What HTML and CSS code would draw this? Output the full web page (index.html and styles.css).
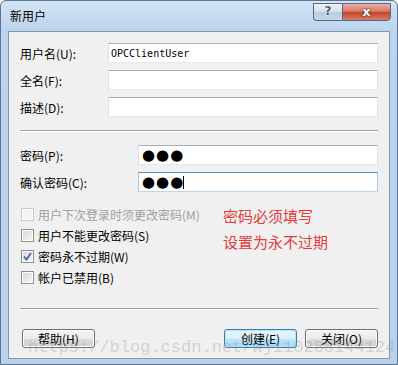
FILE: index.html
```html
<!DOCTYPE html>
<html lang="zh-CN">
<head>
    <meta charset="UTF-8">
    <meta name="viewport" content="width=device-width, initial-scale=1.0">
    <title>新用户</title>
    <link rel="stylesheet" href="styles.css">
</head>
<body>
<div class="window">
    <div class="titlebar">
        <span class="title">新用户</span>
        <div class="caption-btns">
            <span class="cap-help">?</span>
            <span class="cap-close">x</span>
        </div>
    </div>
    <div class="client">
        <div class="fields">
            <div class="row"><span class="label">用户名(U):</span><div class="input name-input">OPCClientUser</div></div>
            <div class="row"><span class="label">全名(F):</span><div class="input name-input"></div></div>
            <div class="row"><span class="label">描述(D):</span><div class="input name-input"></div></div>
        </div>
        <div class="sep"></div>
        <div class="fields">
            <div class="row"><span class="label pw-label">密码(P):</span><div class="input pw-input">●●●</div></div>
            <div class="row"><span class="label pw-label">确认密码(C):</span><div class="input pw-input focused">●●●<span class="caret"></span></div></div>
        </div>
        <div class="options">
            <div class="checks">
                <div class="check disabled"><span class="box"></span>用户下次登录时须更改密码(M)</div>
                <div class="check"><span class="box"></span>用户不能更改密码(S)</div>
                <div class="check"><span class="box"><svg width="11" height="11" viewBox="0 0 11 11"><path d="M2 5.5 L4.5 8.5 L9 2" fill="none" stroke="#4a64a8" stroke-width="1.8"/></svg></span>密码永不过期(W)</div>
                <div class="check"><span class="box"></span>帐户已禁用(B)</div>
            </div>
            <div class="notes">
                <div>密码必须填写</div>
                <div>设置为永不过期</div>
            </div>
        </div>
        <div class="sep sep-bottom"></div>
        <div class="buttons">
            <button class="btn help-btn">帮助(H)</button>
            <div class="btn-group">
                <button class="btn default">创建(E)</button>
                <button class="btn">关闭(O)</button>
            </div>
        </div>
    </div>
    <div class="watermark">https://blog.csdn.net/wj110288144124</div>
</div>
</body>
</html>
```

FILE: styles.css
```css
body {
    margin: 0;
    font-family: "Noto Sans CJK SC", sans-serif;
    font-size: 12px;
    color: #000;
}
.window {
    position: relative;
    width: 398px;
    height: 365px;
    box-sizing: border-box;
    border: 1px solid #5c7391;
    border-radius: 6px 6px 0 0;
    background: linear-gradient(to bottom, #d3e4f6, #bcd4ee 30px, #b9d1ec);
    display: flex;
    flex-direction: column;
    overflow: hidden;
}
.titlebar {
    height: 30px;
    display: flex;
    justify-content: space-between;
    padding: 0 6px 0 9px;
}
.title {
    font-size: 12px;
    line-height: 30px;
    color: #000;
}
.caption-btns {
    display: flex;
    margin-top: 2px;
    height: 18px;
}
.cap-help,
.cap-close {
    box-sizing: border-box;
    height: 18px;
    border: 1px solid #52698a;
    text-align: center;
    line-height: 15px;
    font-family: "DejaVu Sans", sans-serif;
    font-weight: bold;
}
.cap-help {
    width: 29px;
    border-right: none;
    border-radius: 0 0 0 4px;
    background: linear-gradient(to bottom, #eef3f9, #d2dde9 50%, #bccbdc 51%, #c9d8e8);
    color: #4d5e74;
    font-size: 12px;
    text-shadow: 0 0 2px #fff;
}
.cap-close {
    width: 49px;
    border-radius: 0 0 4px 0;
    background: linear-gradient(to bottom, #eab3a6, #d9725b 50%, #c2432a 51%, #d5806a);
    color: #fff;
    font-size: 13px;
    text-shadow: 0 0 2px #5a1d10, 0 0 1px #5a1d10;
}
.client {
    flex: 1;
    margin: 0 7px 5px 7px;
    border: 1px solid #8798ad;
    background-color: #f0f0f0;
    padding: 11px 11px 10px 11px;
}
.fields {
    display: flex;
    flex-direction: column;
    gap: 7px;
}
.row {
    display: flex;
    align-items: center;
}
.label {
    width: 88px;
    flex-shrink: 0;
}
.pw-label {
    width: 118px;
}
.input {
    flex: 1;
    box-sizing: border-box;
    height: 20px;
    background: #fff;
    border: 1px solid;
    border-color: #abadb3 #e2e3ea #e3e9ef #dbdfe6;
    padding: 0 2px;
    display: flex;
    align-items: center;
}
.name-input {
    font-family: "DejaVu Sans Mono", monospace;
    font-size: 10px;
}
.pw-input {
    font-family: "DejaVu Sans", sans-serif;
    font-size: 15px;
    letter-spacing: 1px;
    padding-left: 3px;
}
.focused {
    border-color: #5b8fbd #a9cbe5 #b9d8ee #a9cbe5;
}
.caret {
    display: inline-block;
    width: 1px;
    height: 13px;
    background: #000;
    margin-left: -1px;
}
.sep {
    margin: 13px 0;
    border-top: 1px solid #a0a0a0;
    border-bottom: 1px solid #fff;
}
.sep-bottom {
    margin: 20px 0 19px 0;
}
.options {
    display: flex;
    margin-top: 12px;
}
.checks {
    width: 203px;
}
.check {
    height: 21px;
    display: flex;
    align-items: center;
    padding-left: 1px;
    gap: 4px;
    white-space: nowrap;
}
.box {
    box-sizing: border-box;
    width: 13px;
    height: 13px;
    border: 1px solid #8e8f8f;
    background: linear-gradient(135deg, #d3d6da, #f7f7f7);
    box-shadow: inset 0 0 0 1px #fff;
    display: flex;
    align-items: center;
    justify-content: center;
}
.disabled {
    color: #a0a0a0;
}
.disabled .box {
    border-color: #c8c8c8;
    background: #f4f4f4;
}
.notes {
    margin-top: -1px;
    color: #e23c3c;
    font-size: 15px;
    line-height: 26px;
}
.buttons {
    display: flex;
    justify-content: space-between;
}
.btn-group {
    display: flex;
    gap: 8px;
}
.btn {
    width: 73px;
    height: 19px;
    padding: 0;
    font-family: "Noto Sans CJK SC", sans-serif;
    font-size: 12px;
    line-height: 17px;
    color: #000;
    border: 1px solid #707070;
    border-radius: 3px;
    background: linear-gradient(to bottom, #f4f4f4, #ebebeb 50%, #dddddd 51%, #cfcfcf);
    box-shadow: inset 0 0 0 1px #fcfcfc;
}
.help-btn {
    margin-left: 2px;
}
.btn.default {
    border-color: #3c7fb1;
    background: linear-gradient(to bottom, #eaf6fd, #d9f0fc 50%, #bee6fd 51%, #a7d9f5);
    box-shadow: inset 0 0 0 1px #b4e2fb;
}
.watermark {
    position: absolute;
    left: 27px;
    top: 338px;
    font-family: "Liberation Mono", monospace;
    font-size: 17px;
    line-height: 1;
    color: rgba(150, 150, 150, 0.35);
    white-space: nowrap;
    pointer-events: none;
}
```
